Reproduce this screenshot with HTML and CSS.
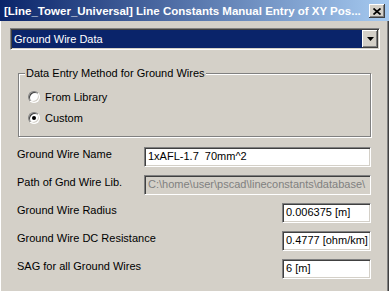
FILE: index.html
```html
<!DOCTYPE html>
<html lang="en">
<head>
    <meta charset="UTF-8">
    <title>Line Constants Manual Entry</title>
    <link rel="stylesheet" href="styles.css">
</head>
<body>
    <div class="window">
        <div class="titlebar">
            <span class="title">[Line_Tower_Universal] Line Constants Manual Entry of XY Pos...</span>
            <div class="close-btn">
                <svg width="8" height="7" viewBox="0 0 8 7"><path d="M0.5 0.5 L7.5 6.5 M7.5 0.5 L0.5 6.5" stroke="#000" stroke-width="1.7" fill="none"/></svg>
            </div>
        </div>

        <div class="content">
            <div class="combo">
                <div class="combo-value">Ground Wire Data</div>
                <div class="combo-btn">
                    <svg width="7" height="4" viewBox="0 0 7 4"><path d="M0 0 H7 L3.5 4 Z" fill="#000"/></svg>
                </div>
            </div>

            <fieldset class="group">
                <legend>Data Entry Method for Ground Wires</legend>
                <div class="radio-row">
                    <span class="radio-box"></span>
                    <span>From Library</span>
                </div>
                <div class="radio-row">
                    <span class="radio-box"><span class="radio-dot"></span></span>
                    <span>Custom</span>
                </div>
            </fieldset>

            <div class="fields">
                <div class="field">
                    <span class="label">Ground Wire Name</span>
                    <div class="edit wide">1xAFL-1.7&nbsp; 70mm^2</div>
                </div>
                <div class="field">
                    <span class="label">Path of Gnd Wire Lib.</span>
                    <div class="edit wide disabled">C:\home\user\pscad\lineconstants\database\</div>
                </div>
                <div class="field">
                    <span class="label">Ground Wire Radius</span>
                    <div class="edit short">0.006375 [m]</div>
                </div>
                <div class="field">
                    <span class="label">Ground Wire DC Resistance</span>
                    <div class="edit short">0.4777 [ohm/km]</div>
                </div>
                <div class="field">
                    <span class="label">SAG for all Ground Wires</span>
                    <div class="edit short">6 [m]</div>
                </div>
            </div>
        </div>
    </div>
</body>
</html>
```

FILE: styles.css
```css
body {
    margin: 0;
    background: #d4d0c8;
    font-family: "Liberation Sans", Arial, sans-serif;
    font-size: 11px;
    color: #000;
}
.window {
    height: 291px;
    display: flex;
    flex-direction: column;
    overflow: hidden;
}
.titlebar {
    height: 21px;
    flex: none;
    display: flex;
    align-items: center;
    justify-content: space-between;
    padding: 1px 4px 0 4px;
    box-sizing: border-box;
    background: linear-gradient(to right, #0a246a, #a6caf0);
    color: #fff;
    font-weight: bold;
    font-size: 11.5px;
    line-height: 13px;
}
.close-btn {
    width: 16px;
    height: 14px;
    box-sizing: border-box;
    background: #d4d0c8;
    box-shadow: inset -1px -1px #404040, inset 1px 1px #fff, inset -2px -2px #808080;
    display: flex;
    align-items: center;
    justify-content: center;
}
.content {
    flex: 1;
    padding: 7px 0 0 10px;
    box-shadow: inset 1px 0 #fff, inset -1px 0 #404040, inset -2px 0 #808080;
}

/* combo box */
.combo {
    width: 370px;
    height: 22px;
    box-sizing: border-box;
    display: flex;
    border: 1px solid;
    border-color: #808080 #fff #fff #808080;
    box-shadow: inset 1px 1px #404040, inset -1px -1px #d4d0c8;
    background: #fff;
    padding: 1px;
}
.combo-value {
    flex: 1;
    background: #0a246a;
    color: #fff;
    line-height: 18px;
    padding-left: 2px;
}
.combo-btn {
    width: 16px;
    height: 18px;
    box-sizing: border-box;
    background: #d4d0c8;
    box-shadow: inset -1px -1px #404040, inset 1px 1px #fff, inset -2px -2px #808080;
    display: flex;
    align-items: center;
    justify-content: center;
}

/* group box */
.group {
    margin: 17px 0 0 8px;
    width: 353px;
    box-sizing: border-box;
    border: 1px solid #808080;
    box-shadow: inset 1px 1px #fff, 1px 1px #fff;
    padding: 6px 0 8px 9px;
    min-width: 0;
}
.group legend {
    margin-left: -3px;
    padding: 0 1px;
    line-height: 13px;
    background: #d4d0c8;
}
.radio-row {
    height: 21px;
    display: flex;
    align-items: center;
    gap: 5px;
}
.radio-box {
    width: 12px;
    height: 12px;
    box-sizing: border-box;
    border-radius: 50%;
    border: 1px solid;
    border-color: #808080 #fff #fff #808080;
    box-shadow: inset 1px 1px #404040, inset -1px -1px #d4d0c8;
    background: #fff;
    display: flex;
    align-items: center;
    justify-content: center;
}
.radio-dot {
    width: 4px;
    height: 4px;
    border-radius: 50%;
    background: #000;
}

/* edit fields */
.fields {
    margin: 10px 0 0 7px;
    width: 354px;
    display: flex;
    flex-direction: column;
    gap: 8px;
}
.field {
    display: flex;
    align-items: flex-start;
}
.label {
    padding-top: 1px;
    line-height: 13px;
}
.edit {
    margin-left: auto;
    height: 20px;
    box-sizing: border-box;
    border: 1px solid;
    border-color: #808080 #fff #fff #808080;
    box-shadow: inset 1px 1px #404040, inset -1px -1px #d4d0c8;
    background: #fff;
    padding: 1px 2px 0 3px;
    line-height: 14px;
    white-space: nowrap;
    overflow: hidden;
}
.wide {
    width: 227px;
}
.short {
    width: 89px;
}
.disabled {
    background: #d4d0c8;
    color: #808080;
}
```
